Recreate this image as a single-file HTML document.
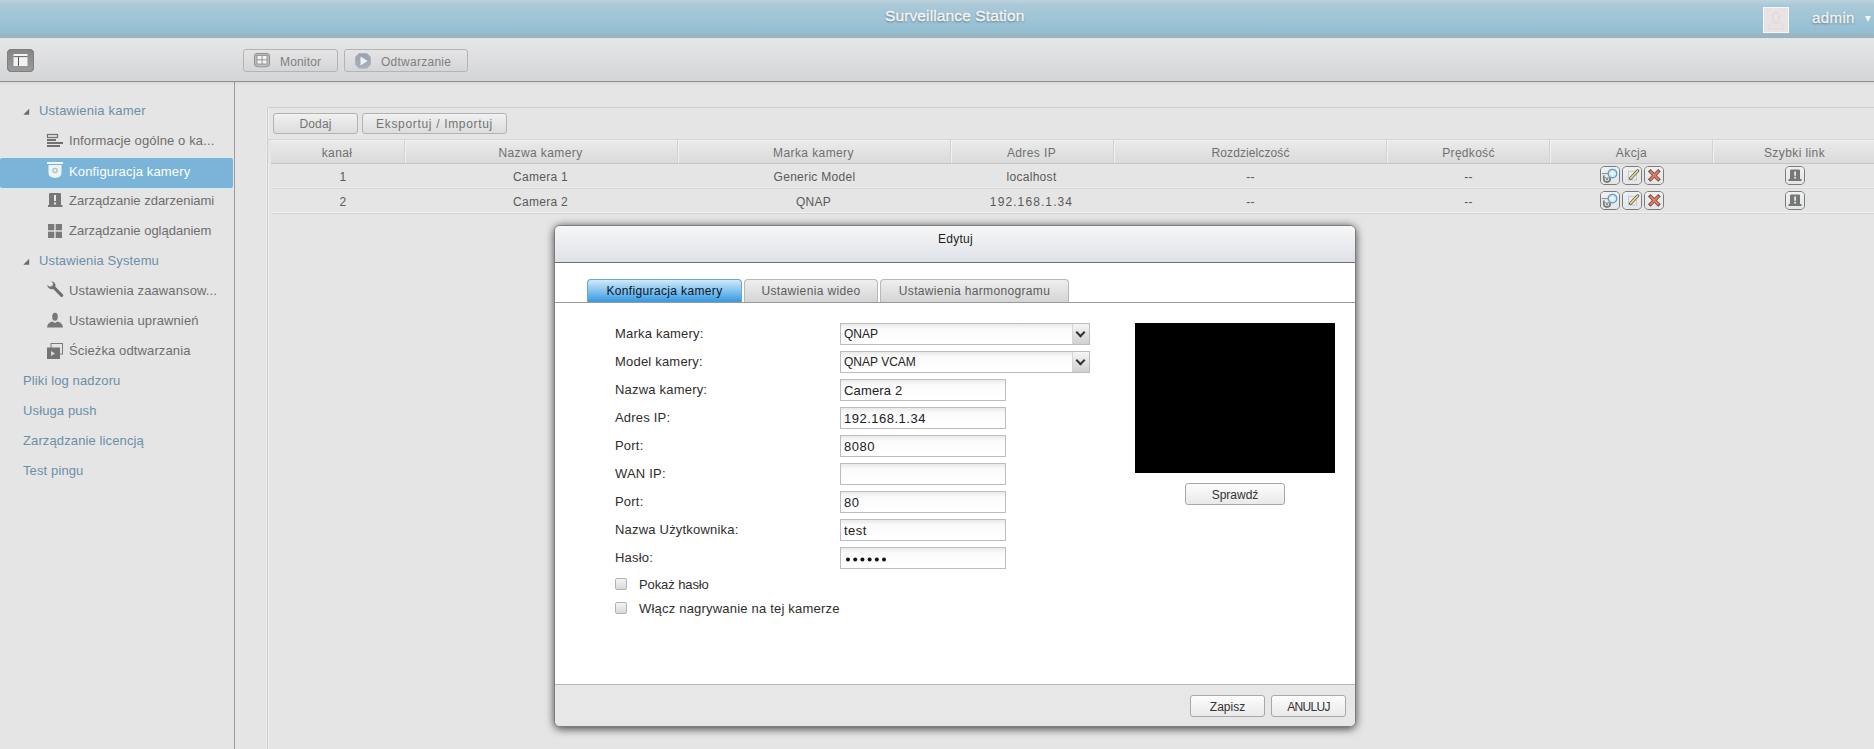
<!DOCTYPE html>
<html><head><meta charset="utf-8">
<style>
*{box-sizing:border-box;margin:0;padding:0}
html,body{width:1874px;height:749px;overflow:hidden;background:#e5e5e5;font-family:"Liberation Sans",sans-serif}
.a{position:absolute}
.nw{white-space:nowrap}
#hdr{left:0;top:0;width:1874px;height:38px;background:linear-gradient(#bdd2dc 0,#aac9d8 5px,#93bfd2 33px,#9ab4c0 35px,#a6b1b6 38px)}
#hdrline{left:0;top:38px;width:1874px;height:2px;background:linear-gradient(#d5e2e8,#e4eaec)}
#title{left:885px;top:7px;font-size:15.5px;color:#f4f6f7;letter-spacing:0.12px;-webkit-text-stroke:0.35px #f4f6f7;text-shadow:0 1px 2px #55656d}
#avatar{left:1763px;top:7px;width:26px;height:26px;border:1px solid #f4f8fa;background:#e9e4e3}
#admin{left:1812px;top:9px;font-size:15px;color:#f2f5f6;letter-spacing:0.4px;-webkit-text-stroke:0.3px #f2f5f6;text-shadow:0 1px 2px #55656d}
#tb{left:0;top:40px;width:1874px;height:41px;background:linear-gradient(#e6e6e7,#d3d5d7)}
#tbline{left:0;top:81px;width:1874px;height:1px;background:#8e8e8e}
#side{left:0;top:82px;width:234px;height:667px;background:#e5e5e5}
#sideb{left:234px;top:82px;width:1px;height:667px;background:#9c9c9c}
.si{position:absolute;left:0;width:233px;height:30px;font-size:13px;letter-spacing:0.12px;color:#6e6e6e;white-space:nowrap}
.si .t{position:absolute;top:8px}
.sh{color:#6b8fa7}
.sel{background:#7ab4d9;color:#fff;border-radius:2px;box-shadow:0 -1px 0 #d3ecf8,0 1px 0 #d3ecf8}
.btn{position:absolute;border:1px solid #b2b2b2;border-radius:3px;background:linear-gradient(#f1f1f1,#dcdcdc);font-size:12px;color:#747474;text-align:center;white-space:nowrap}
#panel{left:267px;top:107px;width:1607px;height:642px;border-left:1px solid #cdcdcd;border-top:1px solid #cfcfcf;background:#e5e5e5;box-shadow:inset 1px 0 0 #eeeeee,-1px 0 0 #ececec}
#thead{left:271px;top:139px;width:1603px;height:25px;background:linear-gradient(#ebebeb,#dadada);border-top:1px solid #d4d4d4;border-bottom:1px solid #c6c6c6;box-shadow:inset 0 1px 0 #f0f0f0,-3px -1px 0 0 #e6e6e6}
.th{position:absolute;top:6px;font-size:12px;color:#707070;letter-spacing:0.4px;text-align:center;white-space:nowrap}
.cd{position:absolute;top:140px;width:1px;height:23px;background:#d2d2d2;box-shadow:1px 0 0 #f2f2f2}
.row{position:absolute;left:272px;width:1602px;height:25px;border-bottom:1px solid #d6d6d6;box-shadow:inset 0 -1px 0 #efefef}
.td{position:absolute;font-size:12px;color:#5a5a5a;letter-spacing:0.3px;text-align:center;white-space:nowrap}

#mshadow{left:555px;top:226px;width:800px;height:501px;border-radius:6px;box-shadow:0 1px 8px 1px rgba(0,0,0,0.7)}
#modal{left:554px;top:225px;width:802px;height:502px;border-radius:6px;overflow:hidden;background:#fff;border:1px solid #7d7d7d}
#mtitle{left:0;top:0;width:800px;height:37px;background:linear-gradient(#f7f7f7,#dde1e7);border-bottom:1px solid #6f6f6f}
.tab{position:absolute;top:53px;height:24px;border:1px solid #b8b8b8;border-bottom:none;border-radius:4px 4px 0 0;background:linear-gradient(#efefef,#d3d3d3);font-size:12px;color:#5c5c5c;text-align:center;padding-top:4px;white-space:nowrap;letter-spacing:0.35px;line-height:14px}
.tab.on{background:linear-gradient(#d0eafa,#2f96e0);border-color:#6aa6d3;color:#0a1628}
#tabline{left:0;top:76px;width:800px;height:1px;background:#9a9a9a}
.lbl{position:absolute;left:60px;font-size:13px;color:#2e2e2e;letter-spacing:0.2px;white-space:nowrap}
.inp{position:absolute;left:285px;height:22px;border:1px solid #bdbdbd;background:linear-gradient(#e9e9e9 0,#fbfbfb 5px,#fff 100%);font-size:13px;color:#222;padding:3px 0 0 3px;white-space:nowrap;letter-spacing:0.5px}
.arr{position:absolute;right:0;top:0;width:17px;height:20px;background:linear-gradient(#f5f5f5,#d0d0d0);border-left:1px solid #d6d6d6}.arr:after{content:"";position:absolute;left:4px;top:5px;width:5px;height:5px;border-right:2px solid #333;border-bottom:2px solid #333;transform:rotate(45deg)}
.cb{position:absolute;left:60px;width:12px;height:12px;border:1px solid #b3b3b3;border-radius:2px;background:linear-gradient(#f4f4f4,#dadada)}
#mfoot{left:0;top:458px;width:800px;height:43px;background:#e7e7e7;border-top:1px solid #b9b9b9}
.mb{position:absolute;height:22px;border:1px solid #a8a8a8;border-radius:3px;background:linear-gradient(#fdfdfd,#e9e9e9);font-size:12px;color:#333;text-align:center;padding-top:4px;white-space:nowrap}
</style></head><body>
<div id="hdr" class="a"></div>
<div id="hdrline" class="a"></div>
<div id="title" class="a nw">Surveillance Station</div>
<div id="avatar" class="a"><svg class="a" style="left:0;top:0" width="24" height="24"><g fill="none" stroke="#ddd6d4" stroke-width="1"><ellipse cx="12" cy="9" rx="3.5" ry="4.5"/><path d="M4.5 21 Q5 15.5 9.5 14.5 L12 16 L14.5 14.5 Q19 15.5 19.5 21 Z"/></g></svg></div>
<div id="admin" class="a nw">admin</div>
<div class="a" style="left:1865px;top:16px;width:0;height:0;border-left:3.5px solid transparent;border-right:3.5px solid transparent;border-top:6px solid #f2f5f6"></div>
<div id="tb" class="a"></div>
<div id="tbline" class="a"></div>
<!-- toolbar -->
<div class="a" style="left:7px;top:49px;width:27px;height:23px;border-radius:4px;background:#8e8e8e;border:1px solid #7a7a7a"></div>
<div class="btn" style="left:243px;top:49px;width:95px;height:23px;background:linear-gradient(#e4e4e5,#d5d6d8);border-color:#b4b4b4"></div>
<div class="btn" style="left:344px;top:49px;width:124px;height:23px;background:linear-gradient(#e4e4e5,#d5d6d8);border-color:#b4b4b4"></div>
<div class="a nw" style="left:280px;top:55px;font-size:12px;color:#808080;letter-spacing:0.16px">Monitor</div>
<div class="a nw" style="left:381px;top:55px;font-size:12px;color:#808080;letter-spacing:0.26px">Odtwarzanie</div>
<!-- sidebar -->
<div id="side" class="a"></div>
<div id="sideb" class="a"></div><div class="a" style="left:0;top:82px;width:1874px;height:3px;background:linear-gradient(rgba(0,0,0,0.06),rgba(0,0,0,0))"></div>
<div class="si sh" style="top:95px"><span class="t" style="left:39px;letter-spacing:0.21px">Ustawienia kamer</span></div>
<div class="si" style="top:125px"><span class="t" style="left:69px">Informacje ogólne o ka...</span></div>
<div class="si sel" style="top:158px"><span class="t" style="left:69px;top:6px;letter-spacing:0.15px">Konfiguracja kamery</span></div>
<div class="si" style="top:185px"><span class="t" style="left:69px;letter-spacing:0">Zarządzanie zdarzeniami</span></div>
<div class="si" style="top:215px"><span class="t" style="left:69px;letter-spacing:0">Zarządzanie oglądaniem</span></div>
<div class="si sh" style="top:245px"><span class="t" style="left:39px">Ustawienia Systemu</span></div>
<div class="si" style="top:275px"><span class="t" style="left:69px">Ustawienia zaawansow...</span></div>
<div class="si" style="top:305px"><span class="t" style="left:69px">Ustawienia uprawnień</span></div>
<div class="si" style="top:335px"><span class="t" style="left:69px">Ścieżka odtwarzania</span></div>
<div class="si sh" style="top:365px"><span class="t" style="left:23px">Pliki log nadzoru</span></div>
<div class="si sh" style="top:395px"><span class="t" style="left:23px">Usługa push</span></div>
<div class="si sh" style="top:425px"><span class="t" style="left:23px">Zarządzanie licencją</span></div>
<div class="si sh" style="top:455px"><span class="t" style="left:23px">Test pingu</span></div>

<!-- sidebar icons -->
<svg class="a" style="left:0;top:82px" width="234" height="300" viewBox="0 82 234 300">
 <path d="M23.3 114.8 L29.2 108.8 L29.2 114.8 Z" fill="#6a6a6a"/>
 <path d="M23.3 264.8 L29.2 258.8 L29.2 264.8 Z" fill="#6a6a6a"/>
 <g fill="#707070">
  <rect x="47.5" y="134.5" width="10" height="3" fill="none" stroke="#707070" stroke-width="1.2"/>
  <rect x="47" y="139" width="9" height="2"/>
  <rect x="47" y="142" width="16" height="2"/>
  <rect x="47" y="145" width="13" height="2"/>
 </g>
 <g fill="#eef3f6">
  <rect x="47" y="162" width="16" height="2"/>
  <path d="M48.5 165 H61.5 V173 Q61.5 177.5 55 178 Q48.5 177.5 48.5 173 Z"/>
 </g>
 <circle cx="55" cy="170.5" r="2.8" fill="#a9c7b8"/>
 <circle cx="55" cy="170.5" r="1.4" fill="#e9f0ee"/>
 <g fill="#777">
  <path d="M50 193 H60 Q61 193 61 194 V205 H62.5 V207 H48 V205 H49 V194 Q49 193 50 193 Z"/>
 </g>
 <rect x="54" y="195" width="2" height="6" fill="#e8e8e8"/>
 <rect x="54" y="202.5" width="2" height="2" fill="#e8e8e8"/>
 <g fill="#7a7a7a">
  <rect x="48" y="224" width="6.3" height="6.3"/>
  <rect x="55.7" y="224" width="6.3" height="6.3"/>
  <rect x="48" y="231.7" width="6.3" height="6.3"/>
  <rect x="55.7" y="231.7" width="6.3" height="6.3"/>
 </g>
 <g fill="#707070">
  <path d="M47.3 285 A4.3 4.3 0 0 0 53.2 289 L60.5 296.5 A1.6 1.6 0 0 0 62.8 294.2 L55.4 286.8 A4.3 4.3 0 0 0 51.3 281.3 L53.2 283.6 L52.3 286 L49.8 286.8 Z"/>
 </g>
 <g fill="#787878">
  <ellipse cx="55" cy="316.8" rx="2.8" ry="4"/>
  <path d="M47 327.5 Q47.5 322.5 52.5 321.5 L55 323 L57.5 321.5 Q62.5 322.5 63 327.5 Z"/>
 </g>
 <rect x="51" y="343.5" width="11.5" height="10.5" fill="none" stroke="#7a7a7a" stroke-width="1"/>
 <rect x="47" y="347.5" width="13" height="11.5" fill="#737373"/>
 <path d="M51 351 L51 356 L55 353.5 Z" fill="#d8d8d8"/>
</svg>
<!-- toolbar icons -->
<svg class="a" style="left:0;top:40px" width="480" height="40" viewBox="0 40 480 40">
 <defs><linearGradient id="g1" x1="0" y1="0" x2="0" y2="1"><stop offset="0" stop-color="#858585"/><stop offset="1" stop-color="#9b9b9b"/></linearGradient>
 <linearGradient id="g2" x1="0" y1="0" x2="0" y2="1"><stop offset="0" stop-color="#9aa2ad"/><stop offset="1" stop-color="#a9b0ba"/></linearGradient></defs>
 <rect x="7.5" y="49.5" width="26" height="22" rx="4" fill="url(#g1)" stroke="#7f7f7f"/>
 <rect x="13.5" y="54" width="14" height="12" fill="#f2f2f2"/>
 <rect x="13.5" y="56.2" width="14" height="0.9" fill="#555"/>
 <rect x="18" y="56.5" width="1" height="9.5" fill="#555"/>
 <rect x="254.5" y="53.5" width="15" height="13" rx="2.5" fill="#bdbdbd" stroke="#8f8f8f"/>
 <rect x="257" y="55.5" width="10" height="8.5" fill="#f4f4f4" stroke="#8a8a8a" stroke-width="0.8"/>
 <rect x="261.6" y="55.5" width="0.9" height="8.5" fill="#8a8a8a"/>
 <rect x="257" y="59.4" width="10" height="0.9" fill="#8a8a8a"/>
 <rect x="258" y="66" width="8" height="1.5" fill="#a8a8a8"/>
 <path d="M359 53.2 H367 L370.8 57 V64.8 L367 68.5 H359 L355.2 64.8 V57 Z" fill="url(#g2)"/>
 <path d="M360.5 56.5 L360.5 65.5 L367.5 61 Z" fill="#eef1f5"/>
</svg>
<!-- panel -->
<div id="panel" class="a"></div>
<div class="btn" style="left:273px;top:113px;width:85px;height:21px;padding-top:3px;letter-spacing:0.16px">Dodaj</div>
<div class="btn" style="left:362px;top:113px;width:145px;height:21px;padding-top:3px;letter-spacing:0.67px">Eksportuj / Importuj</div>
<div id="thead" class="a"></div><div class="a" style="left:268px;top:139px;width:4px;height:1px;background:#d4d4d4"></div>
<div class="cd" style="left:404px"></div>
<div class="cd" style="left:677px"></div>
<div class="cd" style="left:950px"></div>
<div class="cd" style="left:1113px"></div>
<div class="cd" style="left:1386px"></div>
<div class="cd" style="left:1549px"></div>
<div class="cd" style="left:1712px"></div>
<div class="th" style="left:269px;width:136px;top:146px">kanał</div>
<div class="th" style="left:404px;width:273px;top:146px">Nazwa kamery</div>
<div class="th" style="left:677px;width:273px;top:146px">Marka kamery</div>
<div class="th" style="left:950px;width:163px;top:146px">Adres IP</div>
<div class="th" style="left:1114px;width:273px;top:146px;letter-spacing:0.1px">Rozdzielczość</div>
<div class="th" style="left:1387px;width:163px;top:146px;letter-spacing:0.3px">Prędkość</div>
<div class="th" style="left:1550px;width:163px;top:146px">Akcja</div>
<div class="th" style="left:1713px;width:163px;top:146px">Szybki link</div>
<div class="row" style="top:164px"></div>
<div class="row" style="top:189px"></div>
<div class="td" style="left:275px;width:136px;top:170px">1</div>
<div class="td" style="left:404px;width:273px;top:170px">Camera 1</div>
<div class="td" style="left:678px;width:273px;top:170px">Generic Model</div>
<div class="td" style="left:950px;width:163px;top:170px">localhost</div>
<div class="td" style="left:1114px;width:273px;top:170px">--</div>
<div class="td" style="left:1387px;width:163px;top:170px">--</div>
<div class="td" style="left:275px;width:136px;top:195px">2</div>
<div class="td" style="left:404px;width:273px;top:195px">Camera 2</div>
<div class="td" style="left:677px;width:273px;top:195px">QNAP</div>
<div class="td" style="left:950px;width:163px;top:195px;letter-spacing:1.1px">192.168.1.34</div>
<div class="td" style="left:1114px;width:273px;top:195px">--</div>
<div class="td" style="left:1387px;width:163px;top:195px">--</div>


<!-- action icons -->
<svg class="a" style="left:1590px;top:160px" width="230" height="55" viewBox="1590 160 230 55">
 <defs>
  <linearGradient id="ib" x1="0" y1="0" x2="0" y2="1"><stop offset="0" stop-color="#eef1f2"/><stop offset="1" stop-color="#e2e6e8"/></linearGradient>
  <path id="oct" d="M3.5 0.5 H16.5 Q17 0.5 17.4 0.9 L19.1 2.6 Q19.5 3 19.5 3.5 V15.5 Q19.5 16 19.1 16.4 L17.4 18.1 Q17 18.5 16.5 18.5 H3.5 Q3 18.5 2.6 18.1 L0.9 16.4 Q0.5 16 0.5 15.5 V3.5 Q0.5 3 0.9 2.6 L2.6 0.9 Q3 0.5 3.5 0.5 Z"/>
 </defs>
 <g id="acts">
  <use href="#oct" x="1600" y="166" fill="url(#ib)" stroke="#7c7c7c" stroke-width="1"/>
  <use href="#oct" x="1622" y="166" fill="url(#ib)" stroke="#7c7c7c" stroke-width="1"/>
  <use href="#oct" x="1644" y="166" fill="url(#ib)" stroke="#7c7c7c" stroke-width="1"/>
  <!-- connect icon -->
  <path d="M1603.8 175.5 V178.5 Q1603.8 182 1607 182 Q1610.2 182 1610.2 178.5 V175.5" fill="none" stroke="#7d7d7d" stroke-width="1.8"/>
  <path d="M1605.6 177 L1607 180.2 L1608.4 177" fill="none" stroke="#7d7d7d" stroke-width="1"/>
  <path d="M1601.8 173.6 H1609" stroke="#8a8a8a" stroke-width="1"/>
  <circle cx="1612.5" cy="173.6" r="4.3" fill="#c4e6f4" stroke="#6b9cb8" stroke-width="1.3"/>
  <path d="M1612.5 170.8 V176.4 M1609.7 173.6 H1615.3" stroke="#e9f7fc" stroke-width="1.8"/>
  <!-- edit icon -->
  <rect x="1628.5" y="171.3" width="8" height="8.7" fill="none" stroke="#a0a0a0" stroke-width="0.9" stroke-dasharray="1 1"/>
  <path d="M1630.5 178.5 L1637.8 170.8" stroke="#4e4a3a" stroke-width="3" stroke-linecap="round"/>
  <path d="M1630.6 178.4 L1637.7 170.9" stroke="#eadb8e" stroke-width="1.6" stroke-linecap="round"/>
  <!-- delete icon -->
  <path d="M1650.5 171.5 L1658.2 179.2 M1658.2 171.5 L1650.5 179.2" stroke="#6a4a40" stroke-width="3.6" stroke-linecap="square"/>
  <path d="M1650.8 171.8 L1657.9 178.9 M1657.9 171.8 L1650.8 178.9" stroke="#e27a62" stroke-width="2.2" stroke-linecap="square"/>
 </g>
 <use href="#acts" transform="translate(0,25)"/>
 <g id="qlink">
  <use href="#oct" x="1785" y="166" fill="url(#ib)" stroke="#7c7c7c" stroke-width="1"/>
  <path d="M1791 169.5 H1799 Q1800 169.5 1800 170.5 V179 H1801.5 V181 H1788.5 V179 H1790 V170.5 Q1790 169.5 1791 169.5 Z" fill="#777"/>
  <rect x="1794.2" y="171.5" width="1.8" height="4.3" fill="#e8e8e8"/>
  <rect x="1794.2" y="176.8" width="1.8" height="1.8" fill="#e8e8e8"/>
 </g>
 <use href="#qlink" transform="translate(0,25)"/>
</svg>
<div id="mshadow" class="a"></div>
<div id="modal" class="a">
 <div id="mtitle" class="a"></div>
 <div class="a nw" style="left:383px;top:6px;font-size:12px;color:#1e1e1e;letter-spacing:0.27px">Edytuj</div>
 <div class="tab on" style="left:32px;width:155px">Konfiguracja kamery</div>
 <div class="tab" style="left:189px;width:134px">Ustawienia wideo</div>
 <div class="tab" style="left:325px;width:189px">Ustawienia harmonogramu</div>
 <div id="tabline" class="a"></div>
 <div class="lbl" style="top:100px">Marka kamery:</div>
 <div class="lbl" style="top:128px">Model kamery:</div>
 <div class="lbl" style="top:156px">Nazwa kamery:</div>
 <div class="lbl" style="top:184px">Adres IP:</div>
 <div class="lbl" style="top:212px">Port:</div>
 <div class="lbl" style="top:240px">WAN IP:</div>
 <div class="lbl" style="top:268px">Port:</div>
 <div class="lbl" style="top:296px">Nazwa Użytkownika:</div>
 <div class="lbl" style="top:324px">Hasło:</div>
 <div class="inp" style="top:97px;width:250px;font-size:12px;letter-spacing:0">QNAP<div class="arr"></div></div>
 <div class="inp" style="top:125px;width:250px;font-size:12px;letter-spacing:0">QNAP VCAM<div class="arr"></div></div>
 <div class="inp" style="top:153px;width:166px;letter-spacing:0.15px">Camera 2</div>
 <div class="inp" style="top:181px;width:166px">192.168.1.34</div>
 <div class="inp" style="top:209px;width:166px">8080</div>
 <div class="inp" style="top:237px;width:166px"></div>
 <div class="inp" style="top:265px;width:166px">80</div>
 <div class="inp" style="top:293px;width:166px">test</div>
 <div class="inp" style="top:321px;width:166px"><svg class="a" style="left:0;top:0" width="60" height="20"><g fill="#111"><circle cx="7" cy="11.6" r="2"/><circle cx="14.2" cy="11.6" r="2"/><circle cx="21.4" cy="11.6" r="2"/><circle cx="28.6" cy="11.6" r="2"/><circle cx="35.8" cy="11.6" r="2"/><circle cx="43" cy="11.6" r="2"/></g></svg></div>
 <div class="cb" style="top:352px"></div>
 <div class="cb" style="top:376px"></div>
 <div class="lbl" style="left:84px;top:351px;letter-spacing:-0.1px">Pokaż hasło</div>
 <div class="lbl" style="left:84px;top:375px">Włącz nagrywanie na tej kamerze</div>
 <div class="a" style="left:580px;top:97px;width:200px;height:150px;background:#000"></div>
 <div class="mb" style="left:630px;top:257px;width:100px">Sprawdź</div>
 <div id="mfoot" class="a"></div>
 <div class="mb" style="left:635px;top:469px;width:75px">Zapisz</div>
 <div class="mb" style="left:716px;top:469px;width:75px;letter-spacing:-0.7px">ANULUJ</div>
</div>
</body></html>
